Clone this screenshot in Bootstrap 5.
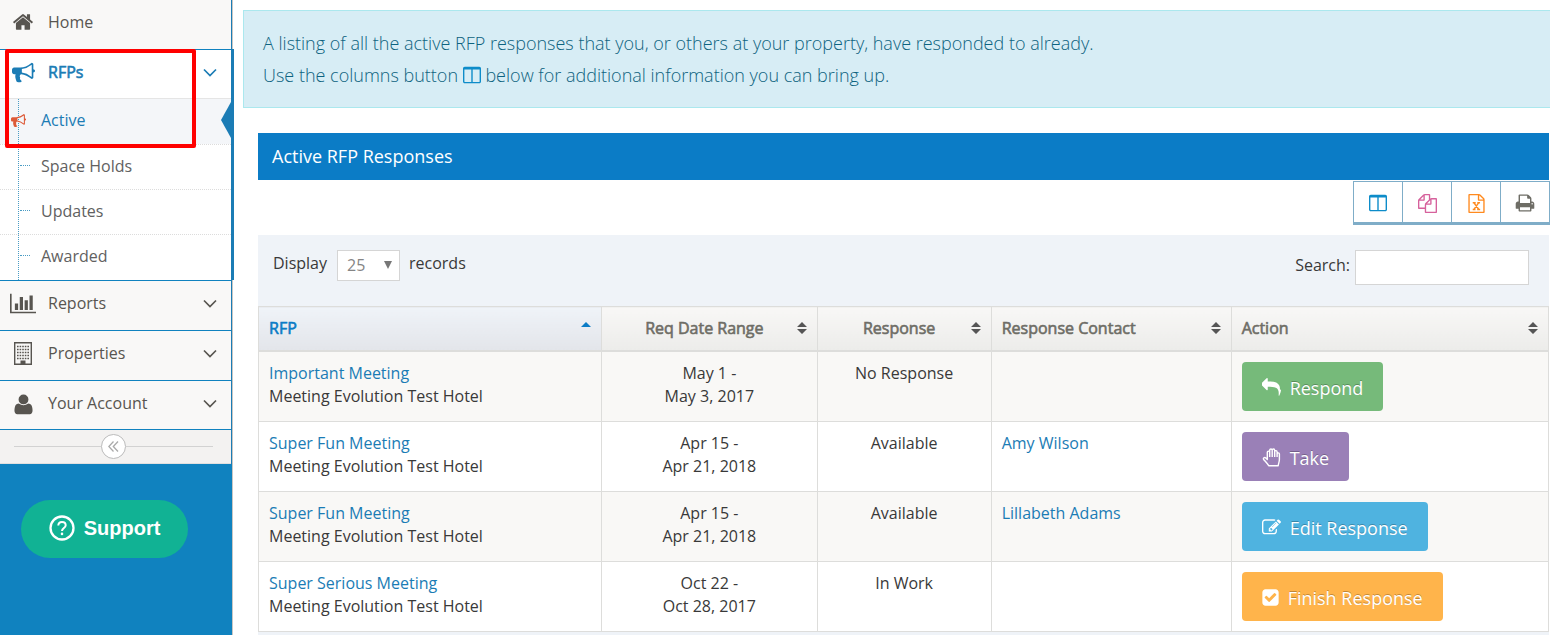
<!DOCTYPE html>
<html lang="en">
<head>
<meta charset="utf-8">
<meta name="viewport" content="width=device-width, initial-scale=1">
<title>Active RFP Responses</title>
<link href="https://cdn.jsdelivr.net/npm/bootstrap@5.3.0/dist/css/bootstrap.min.css" rel="stylesheet">
<style>
  body { font-family: "Open Sans", sans-serif; font-size: 16px; line-height: 23px; color: #393939; background: #fff; }
  a { color: #1b7cb5; text-decoration: none; }
  svg { fill: currentColor; flex: none; }
  .faux-bold { font-weight: 400; -webkit-text-stroke: 0.6px currentColor; }

  /* sidebar */
  .side { width: 233px; flex: none; background: #1082bf; border-right: 1px solid #c9c6c2; }
  .side-nav { border-right: 1px solid #1b7cb5; }
  .side-item { position: relative; background: #f9f8f7; border-bottom: 1px solid #1082bf; }
  .side-item:last-of-type { margin-bottom: 0; }
  .side-link { color: #585550; height: 49px; padding: 0 14px 5px 10px; }
  .side-link.short { height: 48px; padding-bottom: 4px; }
  .side-icon { width: 26px; margin-right: 12px; display: flex; justify-content: center; }
  .side-item.open { background: #fff; }
  .side-item.open .side-link { color: #1b7cb5; }
  .side-item.open::after { content: ""; position: absolute; top: -1px; bottom: 0; right: -3px; width: 3px; background: #1b7cb5; }
  .sub-menu { position: relative; border-top: 1px solid #e5e5e5; padding-bottom: 1px; }
  .sub-menu::before { content: ""; position: absolute; left: 18px; top: 0; bottom: 0; border-left: 1px dotted #4a9cc4; z-index: 1; }
  .sub-link { position: relative; height: 45px; padding: 0 0 2px 41px; color: #616161; }
  .sub-link + .sub-link { border-top: 1px dotted #dcdcdc; }
  .sub-link::before { content: ""; position: absolute; left: 20px; top: 20px; width: 10px; border-top: 1px dotted #4a9cc4; }
  .sub-link.current { color: #1b7cb5; background: #f4f6f9; }
  .sub-link.current::before { display: none; }
  .sub-link.current::after { content: ""; position: absolute; right: 0; top: 3px; border: solid transparent; border-width: 18px 10px 18px 0; border-right-color: #1b7cb5; }
  .sub-link.current svg { position: absolute; left: 11px; color: #dd5a38; z-index: 2; }
  .callout-box { position: absolute; left: 5px; top: 49px; width: 191px; height: 99px; border: 4px solid #f00; border-radius: 2px; pointer-events: none; z-index: 5; }
  .collapse-bar { height: 34px; padding: 0 18px 0 14px; background: #f3f2f1; border-bottom: 1px solid #e0e0e0; }
  .collapse-bar hr { flex: 1; margin: 0; border-color: #d2d2d2; opacity: 1; }
  .collapse-bar button { width: 25px; height: 25px; padding: 0; border: 1px solid #bbb; border-radius: 50%; background: #fff; color: #aaa; }
  .support { margin: 36px 44px 0 21px; padding: 0 6px 2px; height: 58px; background: #11b294; color: #fff; border: 0; border-radius: 29px; font: bold 20px/24px "Liberation Sans", Arial, sans-serif; gap: 9px; }

  /* content */
  .intro { margin: 10px 0 25px 10px; padding: 16px 19px; font-size: 18px; font-weight: 300; line-height: 32px; color: #0d6380; background: #d7edf5; border: 1px solid #abe8ee; border-right: 0; border-radius: 0; }
  .intro svg { color: #0d8cc9; vertical-align: -3px; }
  .panel { margin: 0 1px 0 25px; }
  .panel-title { margin: 0; padding: 0 14px; height: 47px; font-size: 18px; line-height: 47px; font-weight: 400; background: #0b7cc6; color: #fff; }
  .tools { margin: 1px -1px 10px 0; }
  .tools button { width: 50px; height: 44px; margin-left: -1px; padding: 0; background: #fff; border: 1px solid #7fadc8; border-bottom-width: 3px; }
  .tools button:first-child { margin-left: 0; }
  .filters { height: 71px; padding: 15px 20px 0 15px; background: #eff3f8; }
  .filters label { padding-top: 2px; }
  .pick { position: relative; margin: 0 9px 0 10px; }
  .pick select { appearance: none; width: 63px; height: 31px; padding: 0 9px; border: 1px solid #d5d5d5; border-radius: 0; background: #fff; color: #858585; }
  .pick svg { position: absolute; right: 8px; top: 11px; color: #777; pointer-events: none; }
  .filters input { width: 174px; height: 35px; border: 1px solid #d5d5d5; background: #fff; margin-left: 5px; }

  .rfps { table-layout: fixed; margin: 0; border-collapse: collapse; color: #393939; }
  .rfps th, .rfps td { border: 1px solid #dddddb; padding: 10px; vertical-align: top; }
  .rfps thead th { height: 44px; padding: 0 10px; vertical-align: middle; color: #6e6d66; background: linear-gradient(#f8f7f6, #ececea); border-bottom-width: 2px; }
  .rfps thead th.sorted { color: #0b7cc6; background: linear-gradient(#eff3f8, #e3e5ea); }
  .rfps tbody tr:nth-child(odd) { background: #f9f8f6; }
  .rfps tbody td { height: 70px; }
  .rfps th:nth-child(1) { width: 26.6%; }
  .rfps th:nth-child(2) { width: 16.7%; }
  .rfps th:nth-child(3) { width: 13.5%; }
  .rfps th:nth-child(4) { width: 18.6%; }
  .rfps thead svg { color: #555; }
  .rfps thead .sorted svg { color: #0b7cc6; }
  .act { height: 49px; padding: 3px 20px 0 20px; border: 0; border-radius: 4px; color: #fff; font-size: 18px; line-height: 24px; text-shadow: 0 -1px 0 rgba(0, 0, 0, .25); gap: 9px; }
  .act-respond { background: #76ba7a; }
  .act-take { background: #9a80b7; }
  .act-edit { background: #4fb3e0; }
  .act-finish { background: #ffb44b; }
  .panel-end { background: #eff3f8; }
  .tool-cols { color: #0d8cc9; }
  .tool-copy { color: #d6619c; }
  .tool-excel { color: #ff8a1f; }
  .tool-print { color: #6e6d66; }
</style>
</head>
<body>
<svg width="0" height="0" class="position-absolute" aria-hidden="true">
  <symbol id="i-horn" viewBox="0 0 1792 1792"><path d="M1664 640q53 0 90.500 37.500t37.500 90.500-37.500 90.500-90.500 37.500v384q0 52-38 90t-90 38q-417-347-812-380-58 19-91 66t-31 100.500 40 92.500q-20 33-23 65.500t6 58 33.500 55 48 50 61.500 50.500q-29 58-111.500 83t-168.500 11.500-132-55.500q-7-23-29.500-87.500t-32-94.500-23-89-15-101 3.500-98.500 22-110.500h-122q-66 0-113-47t-47-113v-192q0-66 47-113t113-47h480q435 0 896-384 52 0 90 38t38 90v384zm-128 604v-954q-394 302-768 343v270q377 42 768 341z"/></symbol>
  <symbol id="i-down" viewBox="0 0 14 9"><path d="M1 1.500l6 6 6-6" fill="none" stroke="currentColor" stroke-width="1.700"/></symbol>
  <symbol id="i-cols" viewBox="0 0 1664 1792"><path d="M160 1536h608v-1152h-640v1120q0 13 9.500 22.500t22.500 9.500zm1376-32v-1120h-640v1152h608q13 0 22.500-9.500t9.500-22.500zm128-1216v1216q0 66-47 113t-113 47h-1344q-66 0-113-47t-47-113v-1216q0-66 47-113t113-47h1344q66 0 113 47t47 113z"/></symbol>
  <symbol id="i-sort" viewBox="0 0 10 12"><path d="M0 5l5-5 5 5zM0 7h10l-5 5z"/></symbol>
</svg>

<div class="d-flex min-vh-100">
  <aside class="side d-flex flex-column position-relative">
    <nav class="side-nav" aria-label="Main">
      <div class="side-item">
        <a href="#" class="side-link d-flex align-items-center">
          <span class="side-icon"><svg width="22" height="22" viewBox="0 0 1792 1792"><path d="M1472 992v480q0 26-19 45t-45 19h-384v-384h-256v384h-384q-26 0-45-19t-19-45v-480q0-1 .5-3t.5-3l575-474 575 474q1 2 1 6zm223-69l-62 74q-8 9-21 11h-3q-13 0-21-7l-692-577-692 577q-12 8-24 7-13-2-21-11l-62-74q-8-10-7-23.500t11-21.500l719-599q32-26 76-26t76 26l244 204v-195q0-14 9-23t23-9h192q14 0 23 9t9 23v408l219 182q10 8 11 21.500t-7 23.500z"/></svg></span>
          Home
        </a>
      </div>
      <div class="side-item open">
        <a href="#" class="side-link short d-flex align-items-center">
          <span class="side-icon"><svg width="23" height="23" viewBox="0 0 1792 1792"><use href="#i-horn"/></svg></span>
          <span class="faux-bold">RFPs</span>
          <svg class="ms-auto" width="14" height="9"><use href="#i-down"/></svg>
        </a>
        <div class="sub-menu">
          <a href="#" class="sub-link current d-flex align-items-center"><svg width="15" height="15"><use href="#i-horn"/></svg>Active</a>
          <a href="#" class="sub-link d-flex align-items-center">Space Holds</a>
          <a href="#" class="sub-link d-flex align-items-center">Updates</a>
          <a href="#" class="sub-link d-flex align-items-center">Awarded</a>
        </div>
      </div>
      <div class="side-item">
        <a href="#" class="side-link d-flex align-items-center">
          <span class="side-icon"><svg width="26" height="23" viewBox="0 0 2048 1792"><path d="M640 896v512h-256v-512h256zm384-512v1024h-256v-1024h256zm1024 1152v128h-2048v-1536h128v1408h1920zm-640-896v768h-256v-768h256zm384-384v1152h-256v-1152h256z"/></svg></span>
          Reports
          <svg class="ms-auto" width="14" height="9"><use href="#i-down"/></svg>
        </a>
      </div>
      <div class="side-item">
        <a href="#" class="side-link d-flex align-items-center">
          <span class="side-icon"><svg width="18" height="23" viewBox="0 0 18 23"><path d="M.7.700h16.600v21.600H.7z" fill="none" stroke="currentColor" stroke-width="1.400"/><path d="M6.500 18.500h5V22h-5z"/><path d="M3 4.500h12M3 7.500h12M3 10.500h12M3 13.500h12M3 16.500h12" fill="none" stroke="currentColor" stroke-width="1.500" stroke-dasharray="1.600 1"/></svg></span>
          Properties
          <svg class="ms-auto" width="14" height="9"><use href="#i-down"/></svg>
        </a>
      </div>
      <div class="side-item">
        <a href="#" class="side-link short d-flex align-items-center">
          <span class="side-icon"><svg width="23" height="23" viewBox="0 0 1792 1792"><path transform="translate(0 64)" d="M1600 1399q0 109-62.500 187t-150.500 78h-982q-88 0-150.500-78t-62.500-187q0-85 8.500-160.500t31.500-152 58.500-131 94-89 134.500-34.500q195 128 377 128t377-128q76 0 134.500 34.500t94 89 58.500 131 31.500 152 8.500 160.500zm-320-887q0 159-112.500 271.500t-271.500 112.500-271.500-112.500-112.500-271.500 112.500-271.500 271.500-112.500 271.500 112.500 112.500 271.500z"/></svg></span>
          Your Account
          <svg class="ms-auto" width="14" height="9"><use href="#i-down"/></svg>
        </a>
      </div>
      <div class="collapse-bar d-flex align-items-center">
        <hr>
        <button type="button" class="d-flex align-items-center justify-content-center" aria-label="Collapse sidebar"><svg width="11" height="11" viewBox="0 0 11 11"><path d="M5.500.500l-4.700 5 4.700 5M10 .500l-4.700 5 4.700 5" fill="none" stroke="currentColor" stroke-width="1.300"/></svg></button>
        <hr>
      </div>
    </nav>
    <button type="button" class="support d-flex align-items-center justify-content-center">
      <svg width="26" height="26" viewBox="0 0 26 26" fill="none" stroke="currentColor"><circle cx="13" cy="13" r="11.500" fill="none" stroke-width="2.300"/><path d="M9.300 10.600c0-2.300 1.600-3.700 3.700-3.700s3.700 1.300 3.700 3.300c0 2.700-3.700 2.900-3.700 5.800" fill="none" stroke-width="2"/><circle cx="13" cy="18.900" r=".7" stroke-width="1.200"/></svg>
      Support
    </button>
    <div class="callout-box"></div>
  </aside>

  <main class="flex-grow-1 d-flex flex-column">
    <div class="intro">
      A listing of all the active RFP responses that you, or others at your property, have responded to already.<br>
      Use the columns button <svg width="18" height="20"><use href="#i-cols"/></svg> below for additional information you can bring up.
    </div>
    <section class="panel flex-grow-1 d-flex flex-column">
      <h1 class="panel-title">Active RFP Responses</h1>
      <div class="tools d-flex justify-content-end">
        <button type="button" aria-label="Columns" class="tool-cols"><svg width="18" height="20"><use href="#i-cols"/></svg></button>
        <button type="button" aria-label="Copy" class="tool-copy"><svg width="19" height="19" viewBox="0 0 1792 1792"><path d="M1696 384q40 0 68 28t28 68v1216q0 40-28 68t-68 28h-960q-40 0-68-28t-28-68v-288h-544q-40 0-68-28t-28-68v-672q0-40 20-88t48-76l408-408q28-28 76-48t88-20h416q40 0 68 28t28 68v328q68-40 128-40h416zm-544 213l-299 299h299v-299zm-640-384l-299 299h299v-299zm196 647l316-316v-416h-384v416q0 40-28 68t-68 28h-416v640h512v-256q0-40 20-88t48-76zm956 804v-1152h-384v416q0 40-28 68t-68 28h-416v640h896z"/></svg></button>
        <button type="button" aria-label="Export to Excel" class="tool-excel"><svg width="19" height="19" viewBox="0 0 1792 1792"><path d="M1596 380q28 28 48 76t20 88v1152q0 40-28 68t-68 28h-1344q-40 0-68-28t-28-68v-1600q0-40 28-68t68-28h896q40 0 88 20t76 48zm-444-244v376h376q-10-29-22-41l-313-313q-12-12-41-22zm384 1528v-1024h-416q-40 0-68-28t-28-68v-416h-768v1536h1280z"/><path d="M640 820l480 640M1110 820l-460 640M540 820h280M970 820h260M540 1460h260M960 1460h280" fill="none" stroke="currentColor" stroke-width="130"/></svg></button>
        <button type="button" aria-label="Print" class="tool-print"><svg width="20" height="20" viewBox="0 0 1792 1792"><path d="M448 1536h896v-256h-896v256zm0-640h896v-384h-160q-40 0-68-28t-28-68v-160h-640v640zm1152 64q0-26-19-45t-45-19-45 19-19 45 19 45 45 19 45-19 19-45zm128 0v416q0 13-9.500 22.500t-22.500 9.500h-224v160q0 40-28 68t-68 28h-960q-40 0-68-28t-28-68v-160h-224q-13 0-22.500-9.500t-9.500-22.500v-416q0-79 56.500-135.500t135.500-56.500h64v-544q0-40 28-68t68-28h672q40 0 88 20t76 48l152 152q28 28 48 76t20 88v256h64q79 0 135.500 56.500t56.500 135.500z"/></svg></button>
      </div>
      <div class="filters d-flex justify-content-between align-items-start">
        <div class="d-flex">
          <label for="pageSize">Display</label>
          <span class="pick"><select id="pageSize"><option>25</option><option>50</option><option>100</option></select><svg width="8" height="8" viewBox="0 0 8 8"><path d="M0 0h8L4 8z"/></svg></span>
          <label for="pageSize">records</label>
        </div>
        <div class="d-flex">
          <label for="search" class="pt-1">Search:</label><input id="search" type="search">
        </div>
      </div>
      <table class="rfps w-100">
        <thead>
          <tr>
            <th class="sorted"><div class="d-flex align-items-center justify-content-between faux-bold">RFP<svg width="10" height="12" viewBox="0 0 10 12"><path d="M0 5l5-5 5 5z"/></svg></div></th>
            <th><div class="d-flex align-items-center faux-bold"><span class="flex-grow-1 text-center">Req Date Range</span><svg width="10" height="12"><use href="#i-sort"/></svg></div></th>
            <th><div class="d-flex align-items-center faux-bold"><span class="flex-grow-1 text-center">Response</span><svg width="10" height="12"><use href="#i-sort"/></svg></div></th>
            <th><div class="d-flex align-items-center justify-content-between faux-bold">Response Contact<svg width="10" height="12"><use href="#i-sort"/></svg></div></th>
            <th><div class="d-flex align-items-center justify-content-between faux-bold">Action<svg width="10" height="12"><use href="#i-sort"/></svg></div></th>
          </tr>
        </thead>
        <tbody>
          <tr>
            <td><a href="#">Important Meeting</a><br>Meeting Evolution Test Hotel</td>
            <td class="text-center">May 1 -<br>May 3, 2017</td>
            <td class="text-center">No Response</td>
            <td></td>
            <td><button type="button" class="act act-respond d-flex align-items-center"><svg width="19" height="19" viewBox="0 0 1792 1792"><path d="M1792 1120q0 166-127 451-3 7-10.500 24t-13.500 30-13 22q-12 17-28 17-15 0-23.500-10t-8.500-25q0-9 2.500-26.500t2.500-23.500q5-68 5-123 0-112-19.500-200.500t-54-153.500-89-112-118-78-150-49.500-176-23.500-205.500-7h-224v256q0 26-19 45t-45 19-45-19l-512-512q-19-19-19-45t19-45l512-512q19-19 45-19t45 19 19 45v256h224q713 0 875 403 53 134 53 333z"/></svg>Respond</button></td>
          </tr>
          <tr>
            <td><a href="#">Super Fun Meeting</a><br>Meeting Evolution Test Hotel</td>
            <td class="text-center">Apr 15 -<br>Apr 21, 2018</td>
            <td class="text-center">Available</td>
            <td><a href="#">Amy Wilson</a></td>
            <td><button type="button" class="act act-take d-flex align-items-center"><svg width="19" height="19" viewBox="0 0 19 19"><path d="M6.700 17.700c-1-1.800-3.400-4.300-5-6.200-.9-1.300.8-2.700 2.100-1.500l1.500 1.500V4.300c0-1.600 2.300-1.600 2.400 0V2.200c0-1.700 2.500-1.700 2.500 0 0-1.600 2.500-1.500 2.500.2v1.300c0-1.500 2.400-1.400 2.400.2v2c0-1.400 2.300-1.300 2.300.2v5.300c0 2.300-1 4-1.200 6.300zM7.700 4v5M10.200 2.500V9M12.700 3.500V9M15.100 5.500V9" fill="none" stroke="currentColor" stroke-width="1.400" stroke-linejoin="round"/></svg>Take</button></td>
          </tr>
          <tr>
            <td><a href="#">Super Fun Meeting</a><br>Meeting Evolution Test Hotel</td>
            <td class="text-center">Apr 15 -<br>Apr 21, 2018</td>
            <td class="text-center">Available</td>
            <td><a href="#">Lillabeth Adams</a></td>
            <td><button type="button" class="act act-edit d-flex align-items-center"><svg width="19" height="19" viewBox="0 0 1792 1792"><path d="M888 1184l116-116-152-152-116 116v56h96v96h56zm440-720q-16-16-33 1l-350 350q-17 17-1 33t33-1l350-350q17-17 1-33zm80 594v190q0 119-84.500 203.500t-203.500 84.500h-832q-119 0-203.500-84.500t-84.500-203.500v-832q0-119 84.500-203.500t203.500-84.500h832q63 0 117 25 15 7 18 23 3 17-9 29l-49 49q-14 14-32 8-23-6-45-6h-832q-66 0-113 47t-47 113v832q0 66 47 113t113 47h832q66 0 113-47t47-113v-126q0-13 9-22l64-64q15-15 35-7t20 29zm-96-738l288 288-672 672h-288v-288zm444 132l-92 92-288-288 92-92q28-28 68-28t68 28l152 152q28 28 28 68t-28 68z"/></svg>Edit Response</button></td>
          </tr>
          <tr>
            <td><a href="#">Super Serious Meeting</a><br>Meeting Evolution Test Hotel</td>
            <td class="text-center">Oct 22 -<br>Oct 28, 2017</td>
            <td class="text-center">In Work</td>
            <td></td>
            <td><button type="button" class="act act-finish d-flex align-items-center"><svg width="17" height="19" viewBox="128 0 1536 1792"><path d="M813 1299l614-614q19-19 19-45t-19-45l-102-102q-19-19-45-19t-45 19l-467 467-211-211q-19-19-45-19t-45 19l-102 102q-19 19-19 45t19 45l358 358q19 19 45 19t45-19zm851-883v960q0 119-84.500 203.500t-203.500 84.500h-960q-119 0-203.500-84.500t-84.500-203.500v-960q0-119 84.500-203.500t203.500-84.500h960q119 0 203.500 84.500t84.500 203.500z"/></svg>Finish Response</button></td>
          </tr>
        </tbody>
      </table>
      <div class="panel-end flex-grow-1"></div>
    </section>
  </main>
</div>
<script src="https://cdn.jsdelivr.net/npm/bootstrap@5.3.0/dist/js/bootstrap.bundle.min.js"></script>
</body>
</html>
